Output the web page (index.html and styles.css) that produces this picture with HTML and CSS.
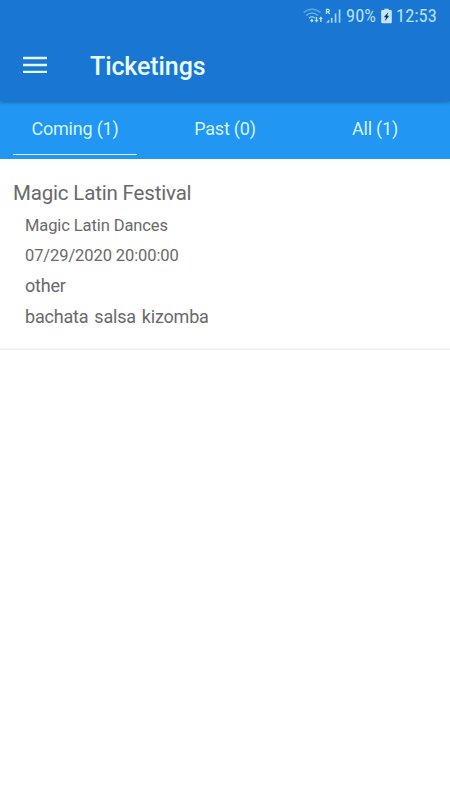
FILE: index.html
```
<!DOCTYPE html>
<html lang="en">
<head>
    <meta charset="UTF-8">
    <meta name="viewport" content="width=device-width, initial-scale=1.0">
    <title>Ticketings</title>
    <link rel="stylesheet" href="styles.css">
</head>
<body>
    <header class="header">
        <div class="status-bar">
            <!-- wifi with data arrows -->
            <svg class="wifi" width="21" height="16" viewBox="0 0 21 16">
                <g fill="none" stroke="#86c8f4" stroke-width="1.5">
                    <path d="M.6 4.6Q9-2.4 17.6 4.6" opacity=".6"/>
                    <path d="M3.2 7.5Q9 2.6 14.9 7.5" opacity=".75"/>
                    <path d="M5.9 10.2Q9 7.4 12.1 10.2"/>
                </g>
                <path d="M7 12.4l1.8-1.6 1.8 1.6-1.8 2z" fill="#b5e1fa"/>
                <path d="M13.5 14.6l-2.1-2.6h1.4V9h1.4v3h1.4zM17.8 8.4l2.1 2.6h-1.4v3h-1.4v-3h-1.4z" fill="#b5e1fa"/>
            </svg>
            <!-- roaming signal -->
            <svg class="signal" width="17" height="16" viewBox="0 0 17 16">
                <path d="M1.5 6V1.4h1.4q1.4 0 1.4 1.2T2.9 3.8H1.5M3 3.8L4.6 6" fill="none" stroke="#b5e1fa" stroke-width="1.3"/>
                <path d="M1 14.8L4.2 11.4v3.4zM5.8 9.8h1.7v5H5.8zM9.7 5.6h1.7v9.2H9.7zM13.7 1.4h1.7v13.4h-1.7z" fill="#a2d7f8"/>
            </svg>
            <span class="percent">90%</span>
            <svg class="battery" width="11" height="16" viewBox="0 0 11 16">
                <path d="M3.3.7h4.4v1.3h2.1q1 0 1 1v11.3q0 1-1 1H1.2q-1 0-1-1V3q0-1 1-1h2.1z" fill="#c3e6fb"/>
                <path d="M7.5 4L2.8 9.3h2.3l-1.3 4 4.5-5.5H6z" fill="#12334f"/>
            </svg>
            <span class="clock">12:53</span>
        </div>
        <div class="toolbar">
            <svg class="menu" width="24" height="18" viewBox="0 0 24 18">
                <path d="M0 2h24M0 9h24M0 15.8h24" stroke="#e3fbff" stroke-width="2.3"/>
            </svg>
            <h1>Ticketings</h1>
        </div>
    </header>

    <nav class="tabs">
        <a class="tab active">Coming (1)</a>
        <a class="tab">Past (0)</a>
        <a class="tab">All (1)</a>
    </nav>

    <main class="list">
        <div class="event">
            <h2>Magic Latin Festival</h2>
            <p class="organizer">Magic Latin Dances</p>
            <p class="date">07/29/2020 20:00:00</p>
            <p class="type">other</p>
            <p class="tags"><span>bachata</span><span>salsa</span><span>kizomba</span></p>
        </div>
    </main>
</body>
</html>
```
FILE: styles.css
```
* {
    padding: 0;
    margin: 0;
    box-sizing: border-box;
}

body {
    font-family: Roboto, Arial, sans-serif;
    background-color: #fff;
    color: #696969;
}

.header {
    position: relative;
    height: 101px;
    background-color: #1976d2;
    box-shadow: 0 1px 4px rgba(0, 0, 0, 0.35);
}

.status-bar {
    display: flex;
    align-items: center;
    justify-content: flex-end;
    height: 31px;
    padding-right: 13px;
    color: #b5e1fa;
    font-size: 18.5px;
}

.wifi {
    margin-right: 1px;
}

.percent, .clock {
    font-family: "Roboto Condensed", Roboto, sans-serif;
    white-space: nowrap;
}

.percent {
    width: 31px;
    margin-left: 4px;
}

.battery {
    margin: 0 4px;
}

.clock {
    width: 41px;
}

.toolbar {
    display: flex;
    align-items: center;
    height: 68px;
    padding-left: 23px;
}

.menu {
    margin-right: 43px;
}

h1 {
    padding-top: 2px;
    font-size: 25px;
    font-weight: 500;
    letter-spacing: -0.1px;
    color: #e8fcff;
}

.tabs {
    display: flex;
    height: 58px;
    padding: 0 13px;
    gap: 26px;
    background-color: #2196f3;
}

.tab {
    flex: 1;
    height: 54px;
    line-height: 56px;
    text-align: center;
    font-size: 18px;
    letter-spacing: -0.2px;
    color: #d3f5fd;
}

.active {
    border-bottom: 1px solid #d3f5fd;
}

.event {
    height: 191px;
    padding: 18px 13px 0;
    border-bottom: 2px solid #f3f3f3;
}

h2 {
    margin-bottom: 1px;
    font-size: 20.5px;
    font-weight: 400;
    line-height: 33px;
    letter-spacing: -0.17px;
}

.event p {
    padding-left: 12px;
    font-size: 16.5px;
    line-height: 30px;
    letter-spacing: -0.1px;
}

.event .type, .event .tags {
    font-size: 18px;
    line-height: 29px;
    letter-spacing: -0.2px;
}

.event .tags {
    display: flex;
    gap: 6px;
    line-height: 33px;
}
```
